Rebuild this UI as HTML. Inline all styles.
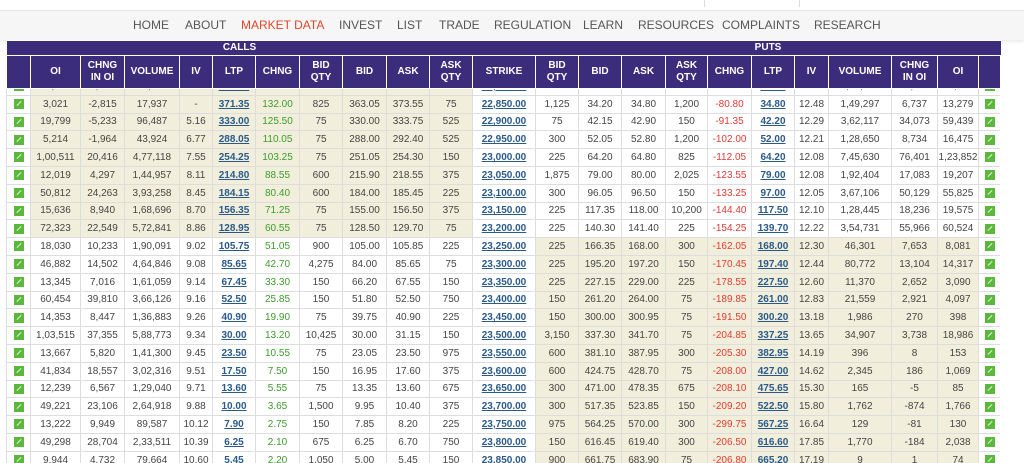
<!DOCTYPE html>
<html><head><meta charset="utf-8"><style>
*{margin:0;padding:0;box-sizing:border-box}
body{width:1024px;height:463px;overflow:hidden;background:#fff;font-family:"Liberation Sans",Arial,sans-serif;position:relative}
#nav{position:absolute;left:0;top:10px;width:1024px;height:30px;background:#f6f6f6;border-top:1px solid #e8e8e8;box-shadow:0 2px 3px rgba(0,0,0,.08)}
#nav span{position:absolute;top:7px;font-size:12px;color:#555}
#stream{position:absolute;left:704px;top:0;width:96px;height:7px;border-left:1px solid #ddd;border-right:1px solid #ddd;background:#fff}
#body{position:absolute;left:6px;top:77px;width:994px;overflow:hidden;height:386px}
#head{position:absolute;left:6px;top:40px;width:994px;z-index:2}
table{border-collapse:collapse;table-layout:fixed;width:994px}
#head th{background:#3b2d7c;color:#fff;font-size:10px;font-weight:bold;border:1px solid #fff;text-align:center;line-height:12px}
#head tr.r1 th{height:15px;border-left:none;border-right:none}
#head tr.r2 th{height:33px}
#body td{height:17.8px;font-size:10px;color:#444;text-align:center;border:1px solid #ddd;white-space:nowrap;overflow:hidden;padding:0}
#body td.b{background:#f1efdb}
#body td.l{color:#2a5a8a;font-weight:bold;text-decoration:underline}
#body td.s{color:#2a5a8a;font-weight:bold;text-decoration:underline;background:#fff}
#body td.g{color:#3c9c2c}
#body td.r{color:#e23b34}
#body td.i{background:#fff}
i{display:inline-block;width:10px;height:10px;background:#5cb83c;vertical-align:middle;position:relative}
i:after{content:"";position:absolute;left:2px;top:4px;width:6px;height:1px;background:#dff5d6;transform:rotate(-45deg)}
</style></head><body>
<div id="stream"></div>
<div id="nav">
<span style="left:133px">HOME</span><span style="left:185px">ABOUT</span><span style="left:241px;color:#e0452b">MARKET DATA</span><span style="left:339px">INVEST</span><span style="left:397px">LIST</span><span style="left:439px">TRADE</span><span style="left:494px">REGULATION</span><span style="left:583px">LEARN</span><span style="left:638px">RESOURCES</span><span style="left:722px">COMPLAINTS</span><span style="left:814px">RESEARCH</span>
</div>
<div id="head"><table>
<colgroup><col style="width:24px"><col style="width:50px"><col style="width:44px"><col style="width:55px"><col style="width:33px"><col style="width:43px"><col style="width:44px"><col style="width:43px"><col style="width:44px"><col style="width:43px"><col style="width:43px"><col style="width:63px"><col style="width:43px"><col style="width:43px"><col style="width:44px"><col style="width:42px"><col style="width:44px"><col style="width:43px"><col style="width:34px"><col style="width:63px"><col style="width:46px"><col style="width:41px"><col style="width:22px"></colgroup>
<tr class="r1"><th colspan="11">CALLS</th><th></th><th colspan="11">PUTS</th></tr>
<tr class="r2"><th></th><th>OI</th><th>CHNG<br>IN OI</th><th>VOLUME</th><th>IV</th><th>LTP</th><th>CHNG</th><th>BID<br>QTY</th><th>BID</th><th>ASK</th><th>ASK<br>QTY</th><th>STRIKE</th><th>BID<br>QTY</th><th>BID</th><th>ASK</th><th>ASK<br>QTY</th><th>CHNG</th><th>LTP</th><th>IV</th><th>VOLUME</th><th>CHNG<br>IN OI</th><th>OI</th><th></th></tr>
</table></div>
<div id="body"><table>
<colgroup><col style="width:24px"><col style="width:50px"><col style="width:44px"><col style="width:55px"><col style="width:33px"><col style="width:43px"><col style="width:44px"><col style="width:43px"><col style="width:44px"><col style="width:43px"><col style="width:43px"><col style="width:63px"><col style="width:43px"><col style="width:43px"><col style="width:44px"><col style="width:42px"><col style="width:44px"><col style="width:43px"><col style="width:34px"><col style="width:63px"><col style="width:46px"><col style="width:41px"><col style="width:22px"></colgroup>
<tr><td class="i"><i></i></td><td class="b">26,886</td><td class="b">4,742</td><td class="b">86,186</td><td class="b"></td><td class="b l">414.00</td><td class="b g">141.00</td><td class="b">150</td><td class="b">414.10</td><td class="b">416.75</td><td class="b">75</td><td class="s">22,800.00</td><td>75</td><td>27.90</td><td>28.10</td><td>225</td><td class="r">-71.60</td><td class="l">28.10</td><td>12.68</td><td>4,50,812</td><td>38,077</td><td>92,177</td><td class="i"><i></i></td></tr>
<tr><td class="i"><i></i></td><td class="b">3,021</td><td class="b">-2,815</td><td class="b">17,937</td><td class="b">-</td><td class="b l">371.35</td><td class="b g">132.00</td><td class="b">825</td><td class="b">363.05</td><td class="b">373.55</td><td class="b">75</td><td class="s">22,850.00</td><td>1,125</td><td>34.20</td><td>34.80</td><td>1,200</td><td class="r">-80.80</td><td class="l">34.80</td><td>12.48</td><td>1,49,297</td><td>6,737</td><td>13,279</td><td class="i"><i></i></td></tr>
<tr><td class="i"><i></i></td><td class="b">19,799</td><td class="b">-5,233</td><td class="b">96,487</td><td class="b">5.16</td><td class="b l">333.00</td><td class="b g">125.50</td><td class="b">75</td><td class="b">330.00</td><td class="b">333.75</td><td class="b">525</td><td class="s">22,900.00</td><td>75</td><td>42.15</td><td>42.90</td><td>150</td><td class="r">-91.35</td><td class="l">42.20</td><td>12.29</td><td>3,62,117</td><td>34,073</td><td>59,439</td><td class="i"><i></i></td></tr>
<tr><td class="i"><i></i></td><td class="b">5,214</td><td class="b">-1,964</td><td class="b">43,924</td><td class="b">6.77</td><td class="b l">288.05</td><td class="b g">110.05</td><td class="b">75</td><td class="b">288.00</td><td class="b">292.40</td><td class="b">525</td><td class="s">22,950.00</td><td>300</td><td>52.05</td><td>52.80</td><td>1,200</td><td class="r">-102.00</td><td class="l">52.00</td><td>12.21</td><td>1,28,650</td><td>8,734</td><td>16,475</td><td class="i"><i></i></td></tr>
<tr><td class="i"><i></i></td><td class="b">1,00,511</td><td class="b">20,416</td><td class="b">4,77,118</td><td class="b">7.55</td><td class="b l">254.25</td><td class="b g">103.25</td><td class="b">75</td><td class="b">251.05</td><td class="b">254.30</td><td class="b">150</td><td class="s">23,000.00</td><td>225</td><td>64.20</td><td>64.80</td><td>825</td><td class="r">-112.05</td><td class="l">64.20</td><td>12.08</td><td>7,45,630</td><td>76,401</td><td>1,23,852</td><td class="i"><i></i></td></tr>
<tr><td class="i"><i></i></td><td class="b">12,019</td><td class="b">4,297</td><td class="b">1,44,957</td><td class="b">8.11</td><td class="b l">214.80</td><td class="b g">88.55</td><td class="b">600</td><td class="b">215.90</td><td class="b">218.55</td><td class="b">375</td><td class="s">23,050.00</td><td>1,875</td><td>79.00</td><td>80.00</td><td>2,025</td><td class="r">-123.55</td><td class="l">79.00</td><td>12.08</td><td>1,92,404</td><td>17,083</td><td>19,207</td><td class="i"><i></i></td></tr>
<tr><td class="i"><i></i></td><td class="b">50,812</td><td class="b">24,263</td><td class="b">3,93,258</td><td class="b">8.45</td><td class="b l">184.15</td><td class="b g">80.40</td><td class="b">600</td><td class="b">184.00</td><td class="b">185.45</td><td class="b">225</td><td class="s">23,100.00</td><td>300</td><td>96.05</td><td>96.50</td><td>150</td><td class="r">-133.25</td><td class="l">97.00</td><td>12.05</td><td>3,67,106</td><td>50,129</td><td>55,825</td><td class="i"><i></i></td></tr>
<tr><td class="i"><i></i></td><td class="b">15,636</td><td class="b">8,940</td><td class="b">1,68,696</td><td class="b">8.70</td><td class="b l">156.35</td><td class="b g">71.25</td><td class="b">75</td><td class="b">155.00</td><td class="b">156.50</td><td class="b">375</td><td class="s">23,150.00</td><td>225</td><td>117.35</td><td>118.00</td><td>10,200</td><td class="r">-144.40</td><td class="l">117.50</td><td>12.10</td><td>1,28,445</td><td>18,236</td><td>19,575</td><td class="i"><i></i></td></tr>
<tr><td class="i"><i></i></td><td class="b">72,323</td><td class="b">22,549</td><td class="b">5,72,841</td><td class="b">8.86</td><td class="b l">128.95</td><td class="b g">60.55</td><td class="b">75</td><td class="b">128.50</td><td class="b">129.70</td><td class="b">75</td><td class="s">23,200.00</td><td>225</td><td>140.30</td><td>141.40</td><td>225</td><td class="r">-154.25</td><td class="l">139.70</td><td>12.22</td><td>3,54,731</td><td>55,966</td><td>60,524</td><td class="i"><i></i></td></tr>
<tr><td class="i"><i></i></td><td>18,030</td><td>10,233</td><td>1,90,091</td><td>9.02</td><td class="l">105.75</td><td class="g">51.05</td><td>900</td><td>105.00</td><td>105.85</td><td>225</td><td class="s">23,250.00</td><td class="b">225</td><td class="b">166.35</td><td class="b">168.00</td><td class="b">300</td><td class="b r">-162.05</td><td class="b l">168.00</td><td class="b">12.30</td><td class="b">46,301</td><td class="b">7,653</td><td class="b">8,081</td><td class="i"><i></i></td></tr>
<tr><td class="i"><i></i></td><td>46,882</td><td>14,502</td><td>4,64,846</td><td>9.08</td><td class="l">85.65</td><td class="g">42.70</td><td>4,275</td><td>84.00</td><td>85.65</td><td>75</td><td class="s">23,300.00</td><td class="b">225</td><td class="b">195.20</td><td class="b">197.20</td><td class="b">150</td><td class="b r">-170.45</td><td class="b l">197.40</td><td class="b">12.44</td><td class="b">80,772</td><td class="b">13,104</td><td class="b">14,317</td><td class="i"><i></i></td></tr>
<tr><td class="i"><i></i></td><td>13,345</td><td>7,016</td><td>1,61,059</td><td>9.14</td><td class="l">67.45</td><td class="g">33.30</td><td>150</td><td>66.20</td><td>67.55</td><td>150</td><td class="s">23,350.00</td><td class="b">225</td><td class="b">227.15</td><td class="b">229.00</td><td class="b">225</td><td class="b r">-178.55</td><td class="b l">227.50</td><td class="b">12.60</td><td class="b">11,370</td><td class="b">2,652</td><td class="b">3,090</td><td class="i"><i></i></td></tr>
<tr><td class="i"><i></i></td><td>60,454</td><td>39,810</td><td>3,66,126</td><td>9.16</td><td class="l">52.50</td><td class="g">25.85</td><td>150</td><td>51.80</td><td>52.50</td><td>750</td><td class="s">23,400.00</td><td class="b">150</td><td class="b">261.20</td><td class="b">264.00</td><td class="b">75</td><td class="b r">-189.85</td><td class="b l">261.00</td><td class="b">12.83</td><td class="b">21,559</td><td class="b">2,921</td><td class="b">4,097</td><td class="i"><i></i></td></tr>
<tr><td class="i"><i></i></td><td>14,353</td><td>8,447</td><td>1,36,883</td><td>9.26</td><td class="l">40.90</td><td class="g">19.90</td><td>75</td><td>39.75</td><td>40.90</td><td>225</td><td class="s">23,450.00</td><td class="b">150</td><td class="b">300.00</td><td class="b">300.95</td><td class="b">75</td><td class="b r">-191.50</td><td class="b l">300.20</td><td class="b">13.18</td><td class="b">1,986</td><td class="b">270</td><td class="b">398</td><td class="i"><i></i></td></tr>
<tr><td class="i"><i></i></td><td>1,03,515</td><td>37,355</td><td>5,88,773</td><td>9.34</td><td class="l">30.00</td><td class="g">13.20</td><td>10,425</td><td>30.00</td><td>31.15</td><td>150</td><td class="s">23,500.00</td><td class="b">3,150</td><td class="b">337.30</td><td class="b">341.70</td><td class="b">75</td><td class="b r">-204.85</td><td class="b l">337.25</td><td class="b">13.65</td><td class="b">34,907</td><td class="b">3,738</td><td class="b">18,986</td><td class="i"><i></i></td></tr>
<tr><td class="i"><i></i></td><td>13,667</td><td>5,820</td><td>1,41,300</td><td>9.45</td><td class="l">23.50</td><td class="g">10.55</td><td>75</td><td>23.05</td><td>23.50</td><td>975</td><td class="s">23,550.00</td><td class="b">600</td><td class="b">381.10</td><td class="b">387.95</td><td class="b">300</td><td class="b r">-205.30</td><td class="b l">382.95</td><td class="b">14.19</td><td class="b">396</td><td class="b">8</td><td class="b">153</td><td class="i"><i></i></td></tr>
<tr><td class="i"><i></i></td><td>41,834</td><td>18,557</td><td>3,02,316</td><td>9.51</td><td class="l">17.50</td><td class="g">7.50</td><td>150</td><td>16.95</td><td>17.60</td><td>375</td><td class="s">23,600.00</td><td class="b">600</td><td class="b">424.75</td><td class="b">428.70</td><td class="b">75</td><td class="b r">-208.00</td><td class="b l">427.00</td><td class="b">14.62</td><td class="b">2,345</td><td class="b">186</td><td class="b">1,069</td><td class="i"><i></i></td></tr>
<tr><td class="i"><i></i></td><td>12,239</td><td>6,567</td><td>1,29,040</td><td>9.71</td><td class="l">13.60</td><td class="g">5.55</td><td>75</td><td>13.35</td><td>13.60</td><td>675</td><td class="s">23,650.00</td><td class="b">300</td><td class="b">471.00</td><td class="b">478.35</td><td class="b">675</td><td class="b r">-208.10</td><td class="b l">475.65</td><td class="b">15.30</td><td class="b">165</td><td class="b">-5</td><td class="b">85</td><td class="i"><i></i></td></tr>
<tr><td class="i"><i></i></td><td>49,221</td><td>23,106</td><td>2,64,918</td><td>9.88</td><td class="l">10.00</td><td class="g">3.65</td><td>1,500</td><td>9.95</td><td>10.40</td><td>375</td><td class="s">23,700.00</td><td class="b">300</td><td class="b">517.35</td><td class="b">523.85</td><td class="b">150</td><td class="b r">-209.20</td><td class="b l">522.50</td><td class="b">15.80</td><td class="b">1,762</td><td class="b">-874</td><td class="b">1,766</td><td class="i"><i></i></td></tr>
<tr><td class="i"><i></i></td><td>13,222</td><td>9,949</td><td>89,587</td><td>10.12</td><td class="l">7.90</td><td class="g">2.75</td><td>150</td><td>7.85</td><td>8.20</td><td>225</td><td class="s">23,750.00</td><td class="b">975</td><td class="b">564.25</td><td class="b">570.00</td><td class="b">300</td><td class="b r">-299.75</td><td class="b l">567.25</td><td class="b">16.64</td><td class="b">129</td><td class="b">-81</td><td class="b">130</td><td class="i"><i></i></td></tr>
<tr><td class="i"><i></i></td><td>49,298</td><td>28,704</td><td>2,33,511</td><td>10.39</td><td class="l">6.25</td><td class="g">2.10</td><td>675</td><td>6.25</td><td>6.70</td><td>750</td><td class="s">23,800.00</td><td class="b">150</td><td class="b">616.45</td><td class="b">619.40</td><td class="b">300</td><td class="b r">-206.50</td><td class="b l">616.60</td><td class="b">17.85</td><td class="b">1,770</td><td class="b">-184</td><td class="b">2,038</td><td class="i"><i></i></td></tr>
<tr><td class="i"><i></i></td><td>9,944</td><td>4,732</td><td>79,664</td><td>10.60</td><td class="l">5.45</td><td class="g">2.20</td><td>1,050</td><td>5.00</td><td>5.45</td><td>150</td><td class="s">23,850.00</td><td class="b">900</td><td class="b">661.75</td><td class="b">683.90</td><td class="b">75</td><td class="b r">-206.80</td><td class="b l">665.20</td><td class="b">17.19</td><td class="b">9</td><td class="b">1</td><td class="b">74</td><td class="i"><i></i></td></tr>
</table></div>
</body></html>
